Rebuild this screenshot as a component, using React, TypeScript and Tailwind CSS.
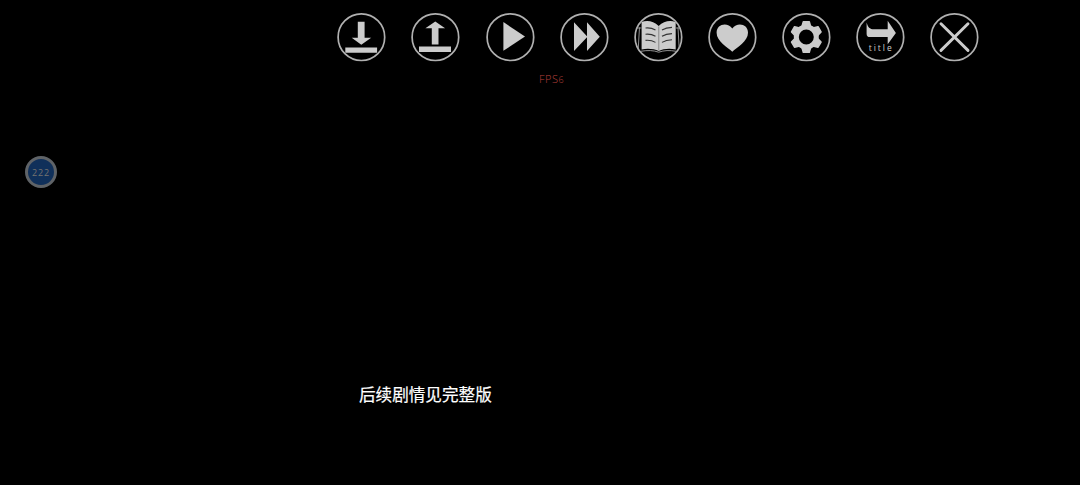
import React from 'react';

interface ToolbarItem {
  key: string;
  label: string;
  icon: React.ReactNode;
}

const toothPair = 'M21.3 8.7h6l1.7 6h-9.4zM21.3 39.3h6l1.7-6h-9.4z';

const toolbarItems: ToolbarItem[] = [
  {
    key: 'save',
    label: 'Save',
    icon: (
      <>
        <path d="M20.8 8.8h6.8v16h6.6l-9.9 7-9.6-7h6.1z" />
        <path d="M8.3 34.4h31.8v5.4H8.3z" />
      </>
    ),
  },
  {
    key: 'load',
    label: 'Load',
    icon: (
      <>
        <path d="M24.3 8.6l9.8 6.6h-6.6v16.2h-6.7V15.2h-6.4z" />
        <path d="M8 33.6h32V39H8z" />
      </>
    ),
  },
  {
    key: 'auto',
    label: 'Auto',
    icon: <path d="M17.4 9.1L39 23.6 17.4 37.8z" />,
  },
  {
    key: 'skip',
    label: 'Skip',
    icon: <path d="M14 9.3l13 14V9.3l12.8 14.4L27 37.9V24.2L14 37.9z" />,
  },
  {
    key: 'log',
    label: 'Log',
    icon: (
      <>
        <path d="M7.6 9c5-2.2 12-1.3 17.1 3.9C29.6 8.1 36.4 6.8 41.7 9.2v27.3c-6-1.2-12.2-.8-16.9 1.5-4.8-2.2-11.3-2.7-17.2-1.5z" />
        <path
          d="M5.5 14.5L4.2 36.5M44 14.5l1.2 21M3 15h4.5M42 15h4M7 38.3c6.5-1.2 12.5-1 17.7.9 5.5-1.9 11-2.1 17.3-.9"
          fill="none"
          stroke="#a0a0a0"
          strokeWidth="0.9"
        />
        <path d="M24.8 13.5V37.5" stroke="#777" strokeWidth="0.8" />
        <path
          d="M11.5 15q5.5-.6 10 2M11.5 21.2q5.5-.6 10 2M11.5 27.4q5.5-.6 10 2M28 17q4-2.6 10-2.6M28 23.2q4-2.6 10-2.6M28 29.4q4-2.6 10-2.6"
          fill="none"
          stroke="#333"
          strokeWidth="1.1"
        />
      </>
    ),
  },
  {
    key: 'favorite',
    label: 'Favorite',
    icon: (
      <path d="M24.3 38.7C20 34.5 8.6 28.5 8.6 19.7c0-9 11-10.8 15.7-4.2 4.7-6.6 15.7-4.8 15.7 4.2 0 8.8-11.4 14.8-15.7 19z" />
    ),
  },
  {
    key: 'settings',
    label: 'Settings',
    icon: (
      <>
        <g stroke="#ccc" strokeWidth="1.5" strokeLinejoin="round">
          <path d={toothPair} />
          <path d={toothPair} transform="rotate(60 24.3 24)" />
          <path d={toothPair} transform="rotate(120 24.3 24)" />
        </g>
        <circle cx="24.3" cy="24" r="10" fill="none" stroke="#ccc" strokeWidth="5" />
      </>
    ),
  },
  {
    key: 'title',
    label: 'Title',
    icon: (
      <>
        <path d="M10.6 9.4c1.2 4.6 3.2 6.8 7.2 6.8h13.9V7.8l8.2 12.1-8.2 11.4v-7.2H14c-2.4 0-3.4-1-3.4-3.4z" />
        <text
          x="12.7"
          y="37.9"
          fontSize="8.5"
          textLength="23"
          className="font-['Open_Sans',sans-serif]"
        >
          title
        </text>
      </>
    ),
  },
  {
    key: 'close',
    label: 'Close',
    icon: (
      <path
        d="M11 10.8l27 26.6M38 10.8l-27 26.6"
        stroke="#ccc"
        strokeWidth="2.9"
        strokeLinecap="round"
      />
    ),
  },
];

const ToolbarButton: React.FC<{ item: ToolbarItem }> = ({ item }) => (
  <button type="button" aria-label={item.label} className="size-[48.4px] shrink-0">
    <svg viewBox="0 0 48.4 48.4" className="size-full overflow-visible" fill="#ccc">
      <circle cx="24.4" cy="24.2" r="23.3" fill="none" stroke="#b0b0b0" strokeWidth="1.7" />
      {item.icon}
    </svg>
  </button>
);

export default function App() {
  return (
    <main className="flex h-[485px] w-[1080px] flex-col overflow-hidden bg-black">
      <nav className="flex gap-[25.75px] pt-[12.8px] pl-[337.3px]">
        {toolbarItems.map((item) => (
          <ToolbarButton key={item.key} item={item} />
        ))}
      </nav>

      <div className="mt-[10px] ml-[539px] flex h-4 items-center">
        <span className="font-['Open_Sans',sans-serif] text-[11px] leading-4 font-light tracking-[0.5px] text-[#b8403c]">
          FPS<span className="text-[9px]">6</span>
        </span>
      </div>

      <div className="mt-[69px] ml-[25px] flex size-8 items-center justify-center rounded-full border-3 border-[#5f6367] bg-[#10305a]">
        <span className="font-['Open_Sans',sans-serif] text-[9px] leading-none tracking-[0.8px] text-[#77736f]">
          222
        </span>
      </div>

      <p className="mt-[194px] ml-[359px] font-['Noto_Sans_CJK_SC',sans-serif] text-[16.6px] leading-6 font-normal whitespace-nowrap text-white [-webkit-text-stroke:0.2px_white]">
        后续剧情见完整版
      </p>
    </main>
  );
}
